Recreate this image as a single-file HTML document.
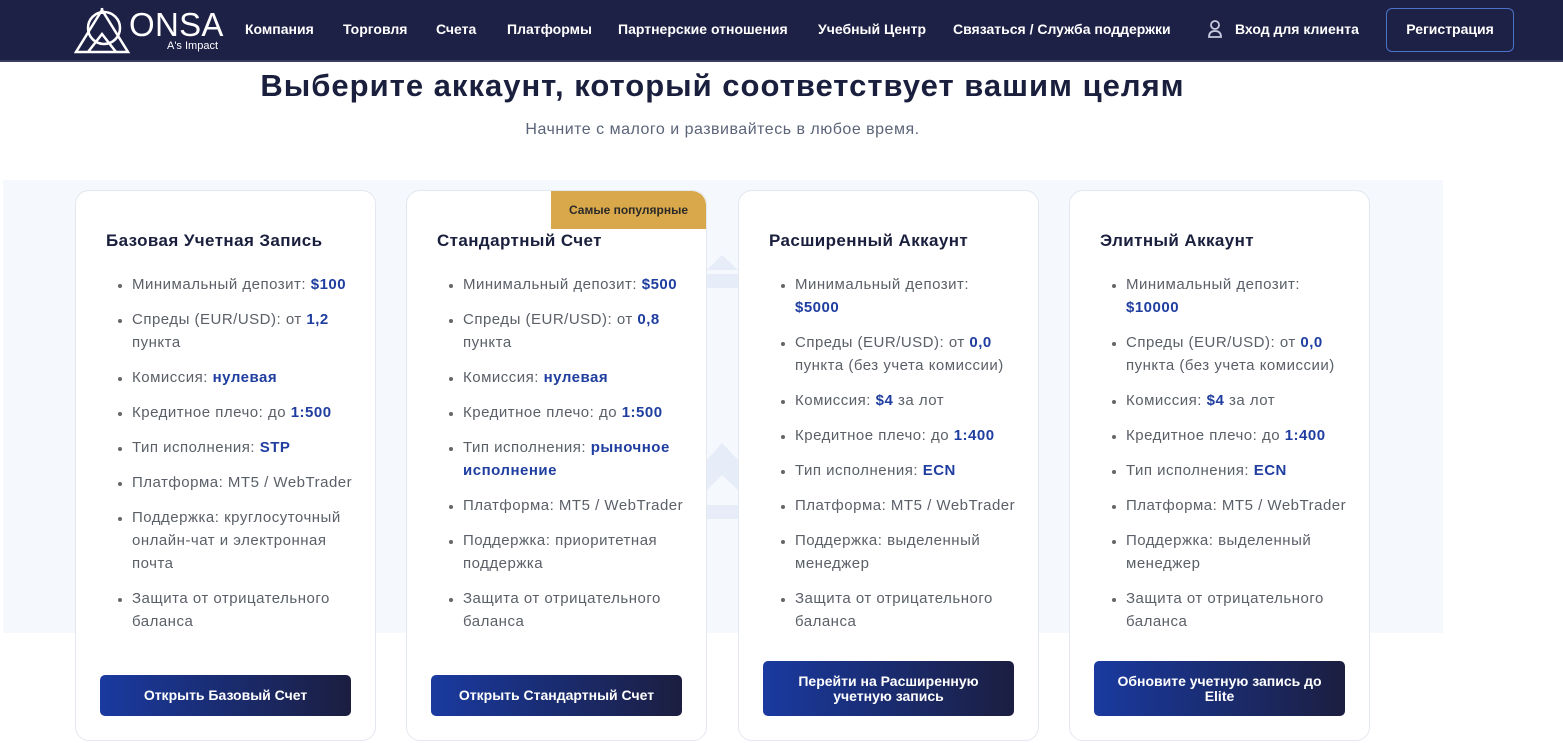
<!DOCTYPE html>
<html><head><meta charset="utf-8"><style>
*{margin:0;padding:0;box-sizing:border-box}
body{width:1563px;height:743px;overflow:hidden;background:#fff;font-family:"Liberation Sans","DejaVu Sans",sans-serif;position:relative}
.hdr{position:absolute;left:0;top:0;width:1563px;height:62px;background:#1e2146;border-bottom:2px solid #3a3d5e}
.nav{position:absolute;top:21px;color:#fff;font-size:14px;font-weight:bold;white-space:nowrap}
.reg{position:absolute;left:1386px;top:8px;width:128px;height:44px;border:1.5px solid #4a72c8;border-radius:6px;color:#fff;font-size:14px;font-weight:bold;text-align:center;line-height:41px}
h1{position:absolute;left:0;width:1445px;top:68px;text-align:center;font-size:31px;letter-spacing:1px;color:#1a1f3d;font-weight:bold}
.sub{position:absolute;left:0;width:1445px;top:121px;text-align:center;font-size:16px;letter-spacing:0.5px;color:#5b6478}
.bg{position:absolute;left:3px;top:180px;width:1440px;height:453px;background:#f5f8fd}
.card{position:absolute;top:190px;width:301px;height:551px;background:#fff;border:1px solid #e3e7ef;border-radius:14px;overflow:hidden}
.card h2{position:absolute;left:30px;top:40px;font-size:17px;letter-spacing:0.4px;color:#1a1f3d;font-weight:bold}
.card ul{position:absolute;left:56px;top:82px;width:221px;list-style:disc;color:#5b6068;font-size:15px;letter-spacing:0.5px;line-height:23px}
.card li{margin-bottom:12px;padding-left:0}
.card li::marker{color:#666;font-size:12px}
.card b{color:#1f3ea0}
.btn{position:absolute;left:24px;bottom:24px;width:251px;border-radius:5px;background:linear-gradient(90deg,#1a3aa0,#1b1e40);color:#fff;font-size:14px;font-weight:bold;text-align:center;display:flex;align-items:center;justify-content:center;line-height:15px}
.badge{position:absolute;right:0;top:0;width:155px;height:38px;background:#d9a84a;border-radius:0 14px 0 0;font-size:12px;font-weight:bold;color:#2a2a2a;text-align:center;line-height:38px}
</style></head><body>
<div class="hdr">
<svg style="position:absolute;left:74px;top:6px" width="60" height="48" viewBox="0 0 60 48" fill="none" stroke="#fff" stroke-width="2.5"><path d="M2 46 L28 4 L54 46 Z"/><path d="M14 46 L28 28 L42 46"/><circle cx="30" cy="22" r="16"/><path d="M28 2 v6"/></svg>
<div style="position:absolute;left:129px;top:6px;color:#fff;font-size:33px;letter-spacing:0.3px">ONSA</div>
<div style="position:absolute;left:167px;top:40px;color:#fff;font-size:11px">A's Impact</div>
<div class="nav" style="left:245px">Компания</div>
<div class="nav" style="left:343px">Торговля</div>
<div class="nav" style="left:436px">Счета</div>
<div class="nav" style="left:507px">Платформы</div>
<div class="nav" style="left:618px">Партнерские отношения</div>
<div class="nav" style="left:818px">Учебный Центр</div>
<div class="nav" style="left:953px">Связаться / Служба поддержки</div>
<svg style="position:absolute;left:1207px;top:19px" width="16" height="20" viewBox="0 0 16 20" fill="none" stroke="#c8cbe0" stroke-width="1.8"><circle cx="8" cy="6" r="4"/><path d="M2 18 q0-6 6-6 q6 0 6 6 z"/></svg>
<div class="nav" style="left:1235px">Вход для клиента</div>
<div class="reg">Регистрация</div>
</div>
<h1>Выберите аккаунт, который соответствует вашим целям</h1>
<div class="sub">Начните с малого и развивайтесь в любое время.</div>
<div class="bg"></div>
<svg style="position:absolute;left:707px;top:250px" width="31" height="280"><path d="M0 20 L15 5 L31 20 Z M0 24 h31 v14 h-31 Z M0 210 L15 193 L31 210 v30 L15 225 L0 240 Z M0 255 h31 v14 h-31 Z" fill="#e6ecf8"/></svg>

<div class="card" style="left:75px"><h2>Базовая Учетная Запись</h2><ul>
<li>Минимальный депозит: <b>$100</b></li>
<li>Спреды (EUR/USD): от <b>1,2</b> пункта</li>
<li>Комиссия: <b>нулевая</b></li>
<li>Кредитное плечо: до <b>1:500</b></li>
<li>Тип исполнения: <b>STP</b></li>
<li>Платформа: MT5 / WebTrader</li>
<li>Поддержка: круглосуточный онлайн-чат и электронная почта</li>
<li>Защита от отрицательного баланса</li></ul>
<div class="btn" style="height:41px">Открыть Базовый Счет</div></div>

<div class="card" style="left:406px"><div class="badge">Самые популярные</div><h2>Стандартный Счет</h2><ul>
<li>Минимальный депозит: <b>$500</b></li>
<li>Спреды (EUR/USD): от <b>0,8</b> пункта</li>
<li>Комиссия: <b>нулевая</b></li>
<li>Кредитное плечо: до <b>1:500</b></li>
<li>Тип исполнения: <b>рыночное исполнение</b></li>
<li>Платформа: MT5 / WebTrader</li>
<li>Поддержка: приоритетная поддержка</li>
<li>Защита от отрицательного баланса</li></ul>
<div class="btn" style="height:41px">Открыть Стандартный Счет</div></div>

<div class="card" style="left:738px"><h2>Расширенный Аккаунт</h2><ul>
<li>Минимальный депозит: <b>$5000</b></li>
<li>Спреды (EUR/USD): от <b>0,0</b> пункта (без учета комиссии)</li>
<li>Комиссия: <b>$4</b> за лот</li>
<li>Кредитное плечо: до <b>1:400</b></li>
<li>Тип исполнения: <b>ECN</b></li>
<li>Платформа: MT5 / WebTrader</li>
<li>Поддержка: выделенный менеджер</li>
<li>Защита от отрицательного баланса</li></ul>
<div class="btn" style="height:55px">Перейти на Расширенную<br>учетную запись</div></div>

<div class="card" style="left:1069px"><h2>Элитный Аккаунт</h2><ul>
<li>Минимальный депозит: <b>$10000</b></li>
<li>Спреды (EUR/USD): от <b>0,0</b> пункта (без учета комиссии)</li>
<li>Комиссия: <b>$4</b> за лот</li>
<li>Кредитное плечо: до <b>1:400</b></li>
<li>Тип исполнения: <b>ECN</b></li>
<li>Платформа: MT5 / WebTrader</li>
<li>Поддержка: выделенный менеджер</li>
<li>Защита от отрицательного баланса</li></ul>
<div class="btn" style="height:55px">Обновите учетную запись до<br>Elite</div></div>
</body></html>
